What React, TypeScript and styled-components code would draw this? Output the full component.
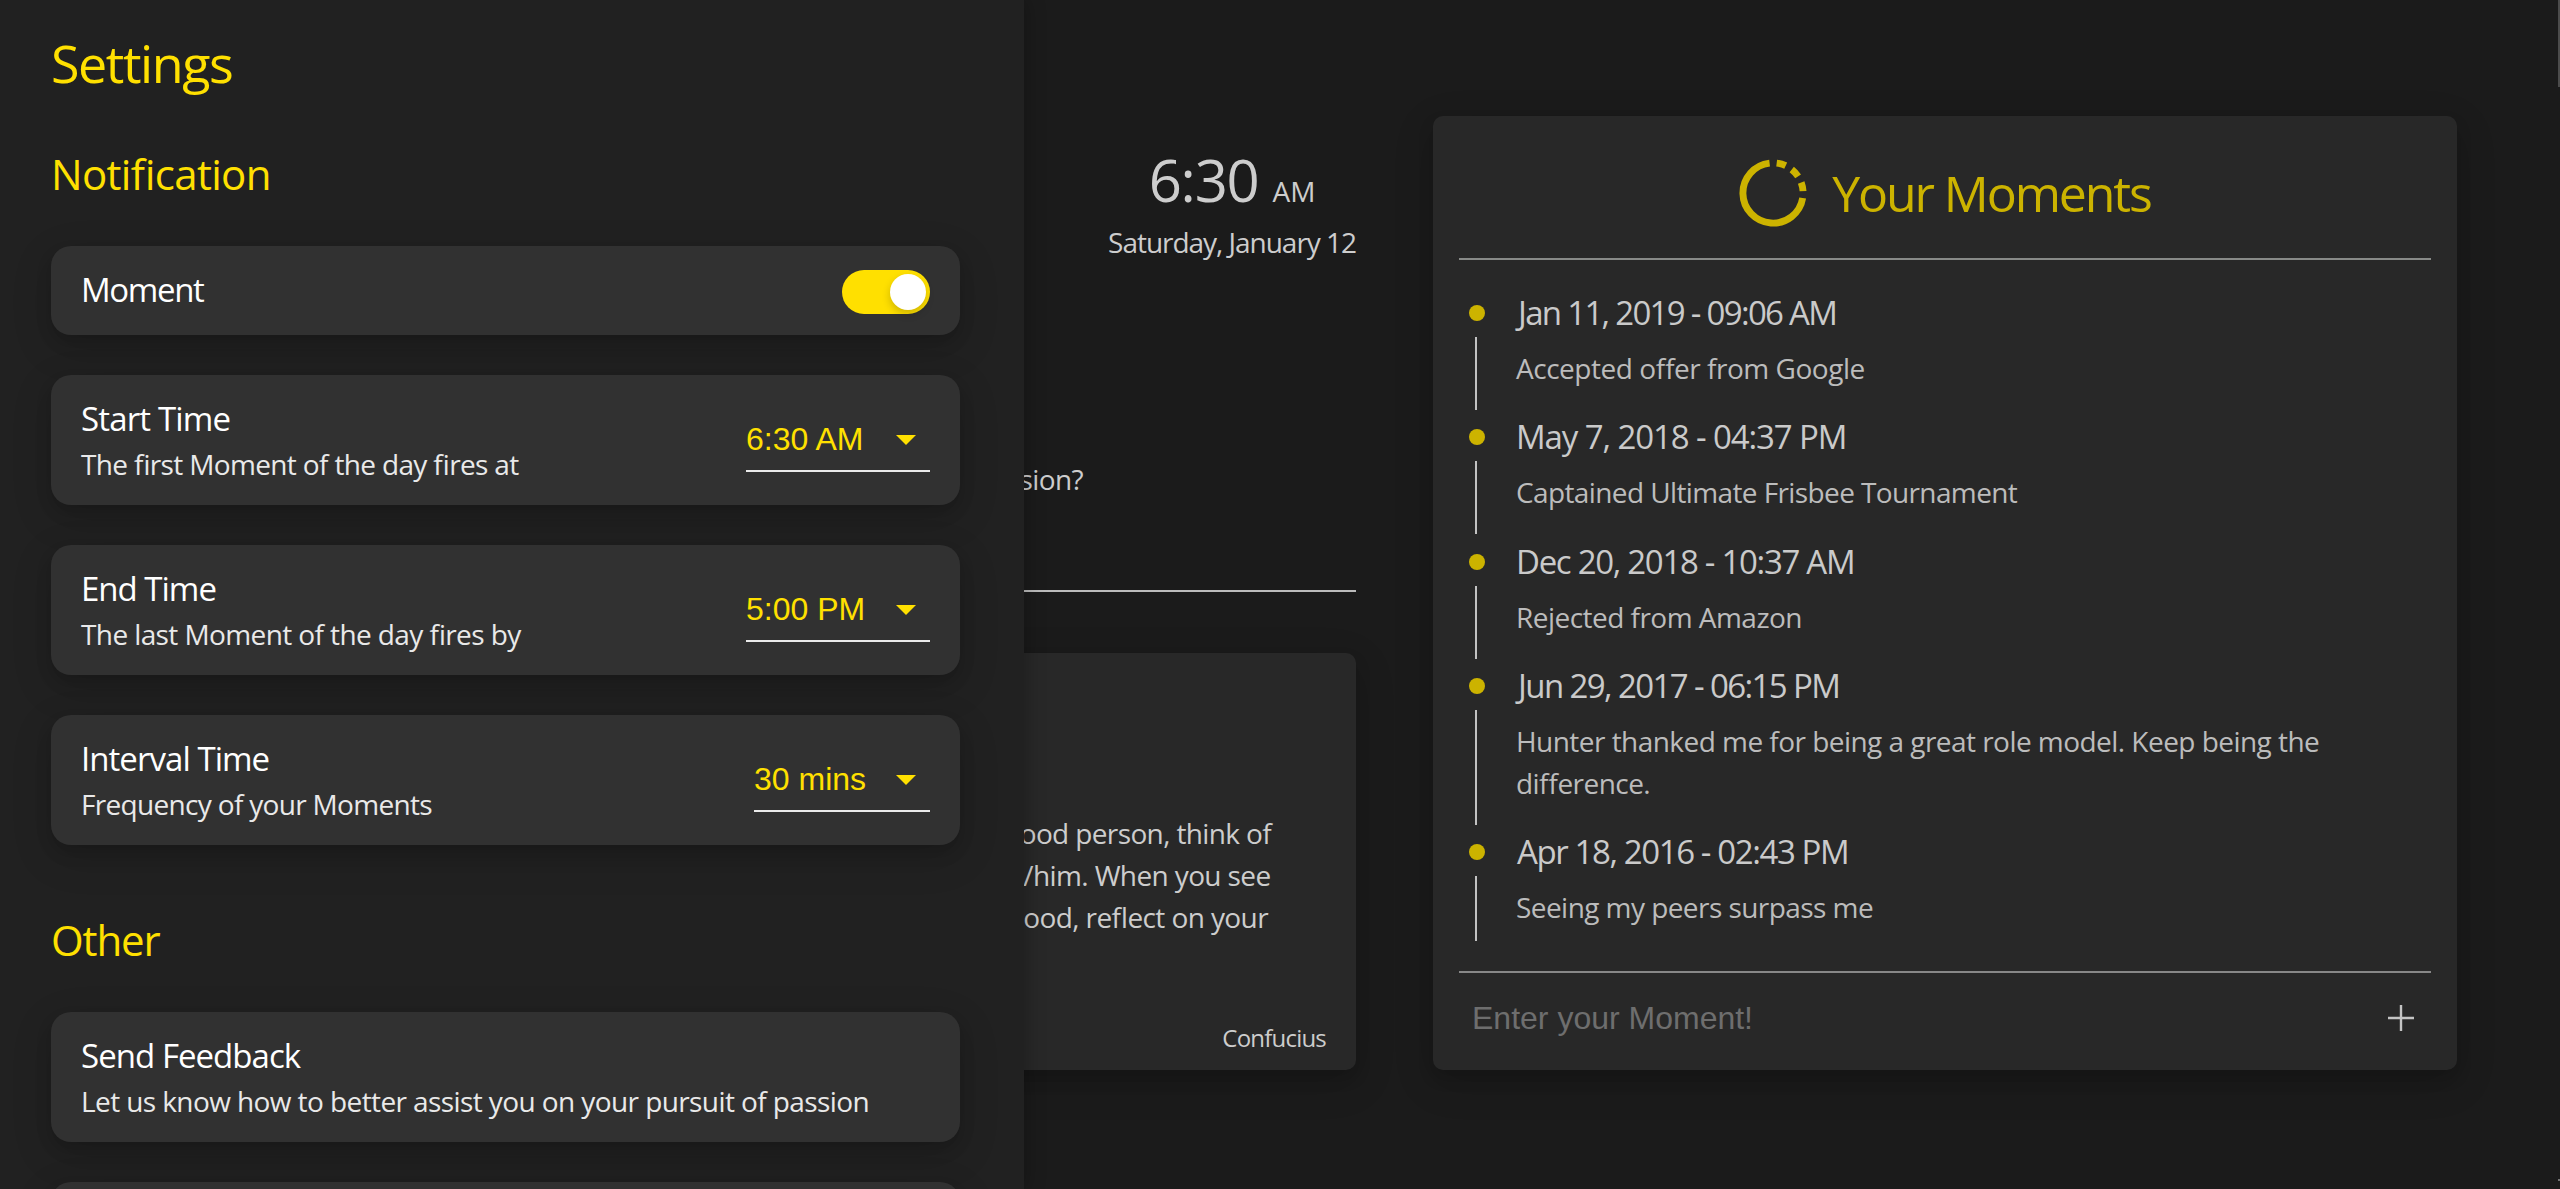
import React from "react";
import styled, { createGlobalStyle, css } from "styled-components";

const YELLOW = "#ffe000";
const DIM_YELLOW = "#ccb300";
const SANS = `"Open Sans", "Noto Sans", sans-serif`;
const UI = `"Liberation Sans", Arial, sans-serif`;

const GlobalStyle = createGlobalStyle`
  *, *::before, *::after { box-sizing: border-box; }
  html, body { margin: 0; padding: 0; background: #1b1b1b; }
  body { font-family: ${SANS}; overflow: hidden; }
`;

type Tracked = { $track?: number };
const tracking = css<Tracked>`
  letter-spacing: ${(p) => p.$track ?? 0}px;
  font-feature-settings: "liga" 1;
`;

const softShadow = css`
  box-shadow: 0 8px 16px rgba(0, 0, 0, 0.14), 0 12px 40px rgba(0, 0, 0, 0.15);
`;

const Page = styled.div`
  position: relative;
  width: 100%;
  height: 1189px;
  overflow: hidden;
  background: #1b1b1b;
`;

/* ---------- Drawer ---------- */

const Drawer = styled.aside`
  position: absolute;
  inset: 0 auto 0 0;
  z-index: 2;
  width: 1024px;
  padding: 37px 64px 0 51px;
  background: #212121;
  box-shadow: 0 0 20px rgba(0, 0, 0, 0.3);
  overflow: hidden;
`;

const DrawerTitle = styled.h1<Tracked>`
  margin: 0;
  font-size: 52px;
  line-height: 52px;
  font-weight: 400;
  color: ${YELLOW};
  ${tracking}
`;

const Section = styled.section<{ $top: number }>`
  display: flex;
  flex-direction: column;
  gap: 40px;
  margin-top: ${(p) => p.$top}px;
`;

const SectionTitle = styled.h2<Tracked>`
  margin: 0 0 7px;
  font-size: 42px;
  line-height: 50px;
  font-weight: 400;
  color: ${YELLOW};
  ${tracking}
`;

const SettingCard = styled.div<{ $compact?: boolean }>`
  display: flex;
  justify-content: space-between;
  align-items: flex-start;
  flex-shrink: 0;
  height: ${(p) => (p.$compact ? 89 : 130)}px;
  padding: 0 30px;
  border-radius: 20px;
  background: #313131;
  ${softShadow}
`;

const SettingText = styled.div`
  display: flex;
  flex-direction: column;
  gap: 2px;
  padding-top: 22px;
  white-space: nowrap;
`;

const SettingName = styled.div<Tracked>`
  font-size: 33px;
  line-height: 44px;
  color: #fff;
  ${tracking}
`;

const SettingHint = styled.div<Tracked>`
  font-size: 28px;
  line-height: 42px;
  color: #e9e9e9;
  ${tracking}
`;

const Switch = styled.button`
  display: flex;
  justify-content: flex-end;
  width: 88px;
  height: 44px;
  margin-top: 24px;
  padding: 4px;
  border: 0;
  border-radius: 22px;
  background: ${YELLOW};
`;

const Knob = styled.span`
  width: 36px;
  height: 36px;
  border-radius: 50%;
  background: #fff;
  box-shadow: 0 4px 8px rgba(0, 0, 0, 0.2);
`;

const Select = styled.div<{ $width: number }>`
  display: flex;
  align-items: flex-start;
  justify-content: space-between;
  width: ${(p) => p.$width}px;
  height: 52px;
  margin-top: 45px;
  padding-right: 14px;
  border-bottom: 2px solid #ebebeb;
  font-family: ${UI};
  font-size: 32px;
  line-height: 38px;
  color: ${YELLOW};
  white-space: nowrap;

  svg {
    display: block;
    margin-top: 15px;
  }
`;

/* ---------- Dashboard ---------- */

const Dashboard = styled.main`
  display: flex;
  gap: 77px;
  padding: 116px 103px 0 332px;
`;

const Column = styled.div`
  display: flex;
  flex-direction: column;
  width: 1024px;
  color: #cdcdcd;
  white-space: nowrap;
`;

const Clock = styled.div`
  display: flex;
  flex-direction: column;
  align-items: center;
  align-self: flex-end;
  gap: 6px;
  margin-top: 29px;
`;

const Time = styled.div<Tracked>`
  display: flex;
  align-items: baseline;
  gap: 14px;
  height: 70px;
  font-size: 58px;
  line-height: 70px;
  ${tracking}
`;

const Meridiem = styled.span`
  font-size: 28px;
  letter-spacing: 0;
`;

const Today = styled.div<Tracked>`
  font-size: 28px;
  line-height: 42px;
  ${tracking}
`;

const Question = styled.div<Tracked>`
  margin: 195px 273px 0 0;
  padding-bottom: 90px;
  font-size: 28px;
  line-height: 42px;
  text-align: right;
  ${tracking}
`;

const Rule = styled.div<{ $color: string }>`
  flex-shrink: 0;
  height: 2px;
  background: ${(p) => p.$color};
`;

const QuoteCard = styled.div`
  display: flex;
  flex-direction: column;
  height: 417px;
  margin-top: 61px;
  padding: 159px 30px 0;
  border-radius: 10px;
  background: #282828;
  text-align: right;
  ${softShadow}
`;

const QuoteLine = styled.div<Tracked & { $end: number }>`
  padding-right: ${(p) => p.$end}px;
  font-size: 28px;
  line-height: 42px;
  ${tracking}
`;

const Author = styled.div<Tracked>`
  margin-top: 82px;
  font-size: 24px;
  line-height: 36px;
  ${tracking}
`;

/* ---------- Moments ---------- */

const MomentsCard = styled.section`
  display: flex;
  flex-direction: column;
  width: 1024px;
  height: 954px;
  padding: 0 26px;
  border-radius: 10px;
  background: #282828;
  ${softShadow}
`;

const MomentsHeader = styled.header`
  display: flex;
  justify-content: center;
  align-items: center;
  gap: 25px;
  height: 142px;
  padding-top: 11px;
`;

const MomentsTitle = styled.h2<Tracked>`
  margin: 1px 0 0;
  font-size: 50px;
  line-height: 60px;
  font-weight: 400;
  color: ${DIM_YELLOW};
  ${tracking}
`;

const MomentList = styled.div`
  height: 681px;
  margin-bottom: 30px;
  padding: 32px 10px 0;
  overflow: hidden;
`;

const MomentRow = styled.article`
  display: flex;
  gap: 31px;
`;

const Marker = styled.div`
  display: flex;
  flex-direction: column;
  width: 16px;
`;

const Dot = styled.span`
  width: 16px;
  height: 16px;
  margin: 13px 0 16px;
  border-radius: 50%;
  background: ${DIM_YELLOW};
`;

const Stem = styled.span`
  flex: 1;
  width: 2px;
  margin: 0 0 6.3px 6px;
  background: #c2c2c2;
`;

const MomentBody = styled.div`
  padding-bottom: 27.3px;
`;

const MomentDate = styled.div<Tracked & { $inset?: number }>`
  margin-bottom: 13px;
  padding-left: ${(p) => p.$inset ?? 0}px;
  font-size: 33px;
  line-height: 42px;
  color: #cacaca;
  ${tracking}
`;

const MomentText = styled.div<Tracked>`
  font-size: 28px;
  line-height: 42px;
  color: #bcbcbc;
  white-space: pre-line;
  ${tracking}
`;

const Composer = styled.form`
  display: flex;
  align-items: center;
  justify-content: space-between;
  height: 97px;
  padding: 0 17px 8px 13px;
`;

const MomentInput = styled.input`
  flex: 1;
  padding: 0;
  border: 0;
  outline: 0;
  background: transparent;
  font: 32px/40px ${UI};
  color: #cacaca;

  &::placeholder {
    color: #6e6e6e;
    opacity: 1;
  }
`;

const ScrollThumb = styled.div<{ $top: number; $height: number; $color: string }>`
  position: absolute;
  top: ${(p) => p.$top}px;
  right: 0;
  width: 2px;
  height: ${(p) => p.$height}px;
  background: ${(p) => p.$color};
`;

/* ---------- Icons ---------- */

const arc = (from: number, to: number) => {
  const point = (deg: number) => {
    const a = (deg * Math.PI) / 180;
    return `${(34 + 30.1 * Math.sin(a)).toFixed(2)} ${(34 - 30.1 * Math.cos(a)).toFixed(2)}`;
  };
  return `M${point(from)}A30.1 30.1 0 ${to - from > 180 ? 1 : 0} 1 ${point(to)}`;
};

const Logo = () => (
  <svg width="68" height="68" viewBox="0 0 68 68" fill="none" stroke={DIM_YELLOW} strokeWidth="6.9">
    <path d={arc(99.5, 353.5)} />
    <path d={arc(7, 25)} />
    <path d={arc(38.5, 56.5)} />
    <path d={arc(69.5, 86.5)} />
  </svg>
);

const Caret = () => (
  <svg width="20" height="10" viewBox="0 0 20 10" fill={YELLOW}>
    <path d="M0 0h20L10 10z" />
  </svg>
);

const Plus = () => (
  <svg width="26" height="26" viewBox="0 0 26 26" stroke="#c4c4c4" strokeWidth="2.4">
    <path d="M13 0v26M0 13h26" />
  </svg>
);

/* ---------- Content ---------- */

const timeSettings = [
  { name: "Start Time", nameTrack: -0.85, hint: "The first Moment of the day fires at", hintTrack: -0.65, value: "6:30 AM", width: 184 },
  { name: "End Time", nameTrack: -1, hint: "The last Moment of the day fires by", hintTrack: -0.6, value: "5:00 PM", width: 184 },
  { name: "Interval Time", nameTrack: -0.95, hint: "Frequency of your Moments", hintTrack: -0.68, value: "30 mins", width: 176 },
];

const moments = [
  { date: "Jan 11, 2019 - 09:06 AM", dateTrack: -1.7, inset: 2, text: "Accepted offer from Google", textTrack: -0.47 },
  { date: "May 7, 2018 - 04:37 PM", dateTrack: -1.1, text: "Captained Ultimate Frisbee Tournament", textTrack: -0.61 },
  { date: "Dec 20, 2018 - 10:37 AM", dateTrack: -1.3, text: "Rejected from Amazon", textTrack: -0.53 },
  {
    date: "Jun 29, 2017 - 06:15 PM",
    dateTrack: -1.6,
    inset: 2,
    text: "Hunter thanked me for being a great role model. Keep being the\ndifference.",
    textTrack: -0.54,
  },
  { date: "Apr 18, 2016 - 02:43 PM", dateTrack: -1.4, inset: 1, text: "Seeing my peers surpass me", textTrack: -0.56 },
];

const quote = [
  { text: "good person, think of", track: -0.63, end: 55 },
  { text: "her/him. When you see", track: -0.62, end: 55.5 },
  { text: "good, reflect on your", track: -0.6, end: 58 },
];

export default function App() {
  return (
    <>
      <GlobalStyle />
      <Page>
        <Drawer>
          <DrawerTitle $track={-1.43}>Settings</DrawerTitle>
          <Section $top={60}>
            <SectionTitle $track={-0.68}>Notification</SectionTitle>
            <SettingCard $compact>
              <SettingText>
                <SettingName $track={-1.37}>Moment</SettingName>
              </SettingText>
              <Switch type="button" aria-label="Moment">
                <Knob />
              </Switch>
            </SettingCard>
            {timeSettings.map((s) => (
              <SettingCard key={s.name}>
                <SettingText>
                  <SettingName $track={s.nameTrack}>{s.name}</SettingName>
                  <SettingHint $track={s.hintTrack}>{s.hint}</SettingHint>
                </SettingText>
                <Select $width={s.width}>
                  {s.value}
                  <Caret />
                </Select>
              </SettingCard>
            ))}
          </Section>
          <Section $top={70}>
            <SectionTitle $track={-1.1}>Other</SectionTitle>
            <SettingCard>
              <SettingText>
                <SettingName $track={-0.95}>Send Feedback</SettingName>
                <SettingHint $track={-0.59}>Let us know how to better assist you on your pursuit of passion</SettingHint>
              </SettingText>
            </SettingCard>
            <SettingCard />
          </Section>
        </Drawer>

        <Dashboard>
          <Column>
            <Clock>
              <Time $track={-1.2}>
                6:30
                <Meridiem>AM</Meridiem>
              </Time>
              <Today $track={-1.03}>Saturday, January 12</Today>
            </Clock>
            <Question $track={-0.6}>passion?</Question>
            <Rule $color="#bcbcbc" />
            <QuoteCard>
              {quote.map((q) => (
                <QuoteLine key={q.text} $track={q.track} $end={q.end}>
                  {q.text}
                </QuoteLine>
              ))}
              <Author $track={-0.79}>Confucius</Author>
            </QuoteCard>
          </Column>

          <MomentsCard>
            <MomentsHeader>
              <Logo />
              <MomentsTitle $track={-2.1}>Your Moments</MomentsTitle>
            </MomentsHeader>
            <Rule $color="#888a88" />
            <MomentList>
              {moments.map((m) => (
                <MomentRow key={m.date}>
                  <Marker>
                    <Dot />
                    <Stem />
                  </Marker>
                  <MomentBody>
                    <MomentDate $track={m.dateTrack} $inset={m.inset}>
                      {m.date}
                    </MomentDate>
                    <MomentText $track={m.textTrack}>{m.text}</MomentText>
                  </MomentBody>
                </MomentRow>
              ))}
            </MomentList>
            <Rule $color="#888888" />
            <Composer>
              <MomentInput placeholder="Enter your Moment!" />
              <Plus />
            </Composer>
          </MomentsCard>
        </Dashboard>

        <ScrollThumb $top={0} $height={87} $color="#4b4b4b" />
        <ScrollThumb $top={1179} $height={2} $color="#777777" />
      </Page>
    </>
  );
}
